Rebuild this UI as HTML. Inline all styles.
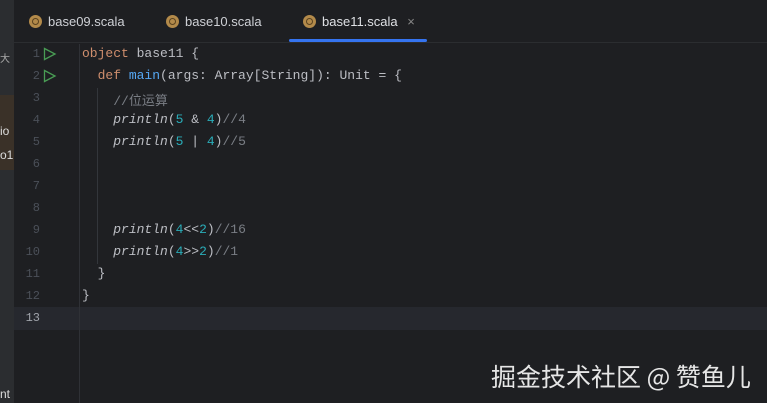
<!DOCTYPE html>
<html><head><meta charset="utf-8"><style>
*{margin:0;padding:0;box-sizing:border-box}
body{width:767px;height:403px;background:#1e1f22;position:relative;overflow:hidden;font-family:"Liberation Mono","Noto Sans CJK SC",monospace}
.left{position:absolute;left:0;top:0;width:14px;height:403px;background:#2b2d30}
.tabs{position:absolute;left:14px;top:0;width:753px;height:43px;background:#1e1f22;border-bottom:1px solid #2b2d30}
.tab{position:absolute;top:14px;font:13px "Liberation Sans","Noto Sans CJK SC",sans-serif;color:#cfd1d6}
.tab i{position:absolute;left:-19px;top:1px;width:13px;height:13px;border-radius:50%;background:#b38a4a}
.tab i:after{content:"";position:absolute;left:3px;top:3px;width:5px;height:5px;border-radius:50%;border:1px solid #5a4220}
.ul{position:absolute;left:289px;top:39px;width:138px;height:3px;background:#3574f0;border-radius:2px}
.ln{position:absolute;left:14px;width:26px;text-align:right;font-size:12px;color:#4b5059}
.code{position:absolute;left:82px;font-size:13px;color:#bcbec4;white-space:pre}
.k{color:#cf8e6d}.f{color:#56a8f5}.n{color:#2aacb8}.c{color:#7a7e85}.i{font-style:italic}
.cur{position:absolute;left:14px;top:307px;width:753px;height:23px;background:#26282e}
.div{position:absolute;left:79px;top:44px;width:1px;height:359px;background:#2f3136}
.run{position:absolute;left:44px;width:0;height:0;border-left:10px solid transparent;border-top:6px solid transparent;border-bottom:6px solid transparent}
.run:before{content:"";position:absolute}
.wm{position:absolute;left:491px;top:358px;font:25px "Noto Sans CJK SC",sans-serif;color:#e6e6e6}
</style></head><body>
<div class="left"></div>
<div style="position:absolute;left:0;top:95px;width:14px;height:75px;background:#3a3128"></div>
<div style="position:absolute;left:0;top:50px;font:10px 'Noto Sans CJK SC';color:#aaa">大</div>
<div style="position:absolute;left:0;top:124px;font:12px 'Liberation Sans';color:#ddd">io</div>
<div style="position:absolute;left:0;top:148px;font:12px 'Liberation Sans';color:#ddd">o1</div>
<div style="position:absolute;left:0;top:387px;font:12px 'Liberation Sans';color:#ddd">nt</div>
<div class="tabs"></div>
<div class="tab" style="left:48px"><i></i>base09.scala</div>
<div class="tab" style="left:185px"><i></i>base10.scala</div>
<div class="tab" style="left:322px;color:#dfe1e5"><i></i>base11.scala <span style="color:#888;margin-left:6px">×</span></div>
<div class="ul"></div>
<div class="cur"></div>
<div class="div"></div>
<svg style="position:absolute;left:43px;top:47px" width="14" height="40"><path d="M1.5 1.5 L12 7 L1.5 12.5Z M1.5 23.5 L12 29 L1.5 34.5Z" fill="none" stroke="#499c54" stroke-width="1.3"/></svg>
<div class="ln" style="top:47px">1</div>
<div class="ln" style="top:69px">2</div>
<div class="ln" style="top:91px">3</div>
<div class="ln" style="top:113px">4</div>
<div class="ln" style="top:135px">5</div>
<div class="ln" style="top:157px">6</div>
<div class="ln" style="top:179px">7</div>
<div class="ln" style="top:201px">8</div>
<div class="ln" style="top:223px">9</div>
<div class="ln" style="top:245px">10</div>
<div class="ln" style="top:267px">11</div>
<div class="ln" style="top:289px">12</div>
<div class="ln" style="top:311px;color:#a0a4ab">13</div>
<div style="position:absolute;left:97px;top:88px;width:1px;height:176px;background:#33363b"></div>
<div class="code" style="top:46px"><span class="k">object</span> base11 {</div>
<div class="code" style="top:68px">  <span class="k">def</span> <span class="f">main</span>(args: Array[String]): Unit = {</div>
<div class="code" style="top:90px">    <span class="c">//位运算</span></div>
<div class="code" style="top:112px">    <span class="i">println</span>(<span class="n">5</span> &amp; <span class="n">4</span>)<span class="c">//4</span></div>
<div class="code" style="top:134px">    <span class="i">println</span>(<span class="n">5</span> | <span class="n">4</span>)<span class="c">//5</span></div>
<div class="code" style="top:222px">    <span class="i">println</span>(<span class="n">4</span>&lt;&lt;<span class="n">2</span>)<span class="c">//16</span></div>
<div class="code" style="top:244px">    <span class="i">println</span>(<span class="n">4</span>&gt;&gt;<span class="n">2</span>)<span class="c">//1</span></div>
<div class="code" style="top:266px">  }</div>
<div class="code" style="top:288px">}</div>
<div class="wm">掘金技术社区 @ 赞鱼儿</div>
</body></html>
